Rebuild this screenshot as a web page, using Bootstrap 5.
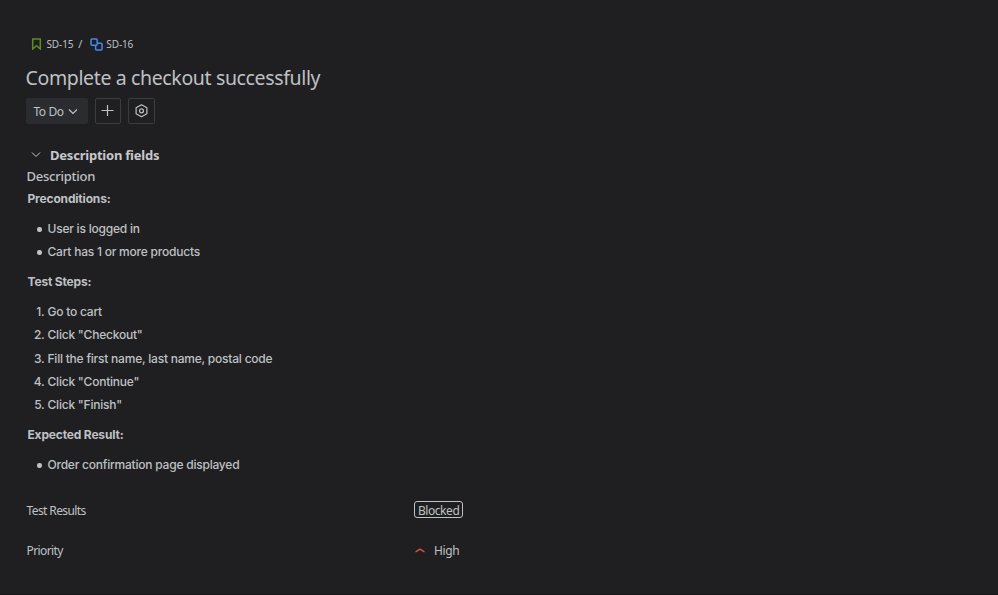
<!DOCTYPE html>
<html lang="en" data-bs-theme="dark">
<head>
<meta charset="utf-8">
<meta name="viewport" content="width=device-width, initial-scale=1">
<title>SD-16 Complete a checkout successfully</title>
<link href="https://cdn.jsdelivr.net/npm/bootstrap@5.3.0/dist/css/bootstrap.min.css" rel="stylesheet">
<style>
body{background:#1f1f21;color:#bfc1c4;font:12px/20px "Segoe UI","Noto Sans","Open Sans",sans-serif}
.issue{min-height:595px;padding:34px 26px 0;border-bottom:1px solid #151517}
.crumbs{height:20px;padding-left:5px;font-size:10px;letter-spacing:-.12px}
.crumb-sep{margin:0 8px 0 5px;font-size:11px}
.issue-title{font-size:19.5px;line-height:28px;font-weight:400;margin:10px 0 6px -.5px;letter-spacing:-.36px;color:#bfc1c4}
.tool{height:26px;width:26px;padding:0;border:1px solid #3b3c3f;border-radius:2px;color:#bfc1c4}
.tool-wide{width:27px}
.tool-status{width:62px;background:#2b2c2f;border-color:#2b2c2f;font-size:12px;letter-spacing:-.4px;padding:2px 3px 0 0}
.tools{gap:7px}
.section-title{font-size:13px;line-height:20px;font-weight:700;margin:21px 0 0;padding-left:5px;gap:9px;color:#c6c8cb;letter-spacing:-.22px}
.field-name{font-size:13px;font-weight:500;line-height:22px;letter-spacing:-.24px;padding-left:.5px}
.doc{font:500 12px/20px Inter,sans-serif;padding:2px 0 0 1.5px;letter-spacing:-.22px}
.doc p{font-weight:700;line-height:20px;letter-spacing:-.17px}
.doc ul,.doc ol{margin:10px 0;padding:0;list-style:none;counter-reset:step}
.doc li{display:flex;align-items:center;line-height:20px;margin-bottom:3.2px}
.doc li:last-child{margin-bottom:0}
.doc ul li::before{content:"";width:4.4px;height:4.4px;border-radius:50%;background:currentColor;margin:1px 5.8px 0 9.8px}
.doc ol li::before{counter-increment:step;content:counter(step) ".";width:17px;margin-right:3px;text-align:right}
.field-row{height:40px;padding-left:.5px;letter-spacing:-.4px}
.field-label{width:387.5px;letter-spacing:-.6px}
.result{height:17px;line-height:17px;border:1px solid #bfc1c4;border-radius:3px;padding:0 3px;letter-spacing:-.45px;margin-top:-3px}
</style>
</head>
<body>
<main class="issue">
  <nav class="crumbs d-flex align-items-center">
    <svg width="11" height="12" viewBox="0 0 11 12" fill="none" stroke="#5f8c22" stroke-width="1.5"><path d="M1.7 1h7.6v10L5.5 7.8 1.7 11z"/></svg>
    <span style="margin-left:4.5px">SD-15</span><span class="crumb-sep">/</span>
    <svg width="13" height="13" viewBox="0 0 13 13" fill="none" stroke="#4688ec" stroke-width="1.5"><rect x="1" y="1" width="6.2" height="6.2" rx="1"/><path d="M8.5 5.3H11a1 1 0 0 1 1 1V11a1 1 0 0 1-1 1H6.6a1 1 0 0 1-1-1V8.5M7.2 5.3h1.3M5.6 7.2v1.3"/></svg>
    <span style="margin-left:3px">SD-16</span>
  </nav>
  <h1 class="issue-title">Complete a checkout successfully</h1>
  <div class="tools d-flex">
    <button class="btn tool tool-status d-flex align-items-center justify-content-center">To Do<svg class="ms-1" width="10" height="10" viewBox="0 0 10 10" fill="none" stroke="currentColor" stroke-width="1.2"><path d="M1 2.500l4 4 4-4"/></svg></button>
    <button class="btn tool d-flex align-items-center justify-content-center" aria-label="Add"><svg width="14" height="14" viewBox="0 0 14 14" fill="none" stroke="currentColor" stroke-width="1.2"><path d="M6.500 1v11M.500 6.500h12"/></svg></button>
    <button class="btn tool tool-wide d-flex align-items-center justify-content-center" aria-label="Configure"><svg width="15" height="14" viewBox="0 0 15 14" fill="none" stroke="currentColor" stroke-width="1.2"><path d="M7.500 .8l5.400 3v6l-5.400 3-5.400-3v-6z" stroke-linejoin="round"/><circle cx="7.500" cy="6.800" r="2"/></svg></button>
  </div>
  <h2 class="section-title d-flex align-items-center"><svg width="10" height="10" viewBox="0 0 10 10" fill="none" stroke="currentColor"><path d="M1 2.500l4 4 4-4"/></svg><span>Description fields</span></h2>
  <div class="field-name">Description</div>
  <article class="doc">
    <p class="m-0">Preconditions:</p>
    <ul><li>User is logged in</li><li>Cart has 1 or more products</li></ul>
    <p class="m-0">Test Steps:</p>
    <ol><li>Go to cart</li><li>Click "Checkout"</li><li>Fill the first name, last name, postal code</li><li>Click "Continue"</li><li>Click "Finish"</li></ol>
    <p class="m-0">Expected Result:</p>
    <ul><li>Order confirmation page displayed</li></ul>
  </article>
  <div class="field-row d-flex align-items-center mt-3"><span class="field-label">Test Results</span><span class="result">Blocked</span></div>
  <div class="field-row d-flex align-items-center"><span class="field-label">Priority</span><svg width="12" height="10" viewBox="0 0 12 10" fill="none" stroke="#e2563c" stroke-width="1.400"><path d="M1.500 6l4-2.700q.5-.3 1 0L10.500 6"/></svg><span class="ms-2">High</span></div>
</main>
<script src="https://cdn.jsdelivr.net/npm/bootstrap@5.3.0/dist/js/bootstrap.bundle.min.js"></script>
</body>
</html>
